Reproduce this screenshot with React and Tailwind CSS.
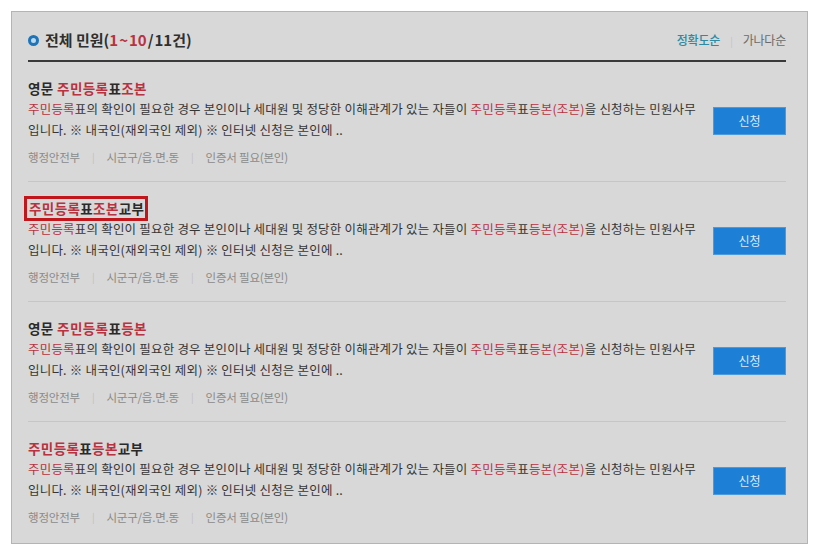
import React from "react";

const R = ({ children }) => <span className="text-[#b83240]">{children}</span>;

const items = [
  { pre: "영문 ", a: "조본", post: "", boxed: false },
  { pre: "", a: "조본", post: "교부", boxed: true },
  { pre: "영문 ", a: "등본", post: "", boxed: false },
  { pre: "", a: "등본", post: "교부", boxed: false },
];

function Title({ it }) {
  const inner = (
    <>
      {it.pre}
      <R>주민등록</R>표<R>{it.a}</R>
      {it.post}
    </>
  );
  return (
    <div className="h-[20px] leading-[20px] text-[13.5px] tracking-[0.4px] font-bold text-[#2a2a2a]">
      {it.boxed ? (
        <span className="relative inline-block pl-[1px]">
          {inner}
          <span className="absolute -left-[4px] -right-[4px] -top-[2px] -bottom-[3px] border-[3px] border-[#c2161d]" />
        </span>
      ) : (
        inner
      )}
    </div>
  );
}

function Item({ it, last }) {
  return (
    <div className={`flex pt-[16px] ${last ? "pb-[14px]" : "pb-[14px] border-b border-[#c6c6c6]"}`}>
      <div className="flex-1">
        <Title it={it} />
        <div className="text-[12.5px] leading-[21px] tracking-[0.2px] text-[#363636] whitespace-nowrap">
          <R>주민등록</R>표의 확인이 필요한 경우 본인이나 세대원 및 정당한 이해관계가 있는 자들이 <R>주민등록</R>표<R>등본(조본)</R>을 신청하는 민원사무
          <br />
          입니다. ※ 내국인(재외국인 제외) ※ 인터넷 신청은 본인에 ..
        </div>
        <div className="mt-[7px] h-[20px] leading-[20px] text-[11.5px] tracking-[-0.2px] text-[#8a8a8a] flex items-center">
          <span>행정안전부</span>
          <span className="mx-[12px] text-[#c0c0c0] text-[10px]">|</span>
          <span>시군구/읍.면.동</span>
          <span className="mx-[12px] text-[#c0c0c0] text-[10px]">|</span>
          <span>인증서 필요(본인)</span>
        </div>
      </div>
      <button className="mt-[29px] self-start w-[73px] h-[28px] bg-[#1d7fd6] border border-[#4a9ae0] text-[#dbeaf8] text-[12px] leading-none">
        신청
      </button>
    </div>
  );
}

export default function App() {
  return (
    <div
      className="w-[820px] h-[556px] bg-white pt-[11px] pl-[11px]"
      style={{ fontFamily: '"Noto Sans CJK KR", "Noto Sans", sans-serif' }}
    >
      <div className="w-[797px] h-[533px] bg-[#d8d8d8] border border-[#b4b4b4] pl-[16px] pr-[21px]">
        <div className="h-[50px] pt-[17px] flex items-start justify-between border-b-2 border-[#3a3a3a]">
          <div className="flex items-center h-[22px]">
            <span className="w-[11px] h-[11px] rounded-full border-[3px] border-[#1f74b8] bg-[#bcd9ee] mr-[6px]" />
            <span className="text-[15px] font-bold text-[#2f2f2f] leading-[22px]">
              전체 민원(<span className="text-[#b83240]">1<span className="mx-[1px]">~</span>10</span><span className="mx-[1px]">/</span>11건)
            </span>
          </div>
          <div className="flex items-center h-[22px] text-[12px] tracking-[-0.2px]">
            <span className="text-[#2d8aa3] font-medium">정확도순</span>
            <span className="mx-[10px] text-[#c4c4c4] text-[10px]">|</span>
            <span className="text-[#6a6a6a]">가나다순</span>
          </div>
        </div>
        {items.map((it, i) => (
          <Item key={i} it={it} last={i === items.length - 1} />
        ))}
      </div>
    </div>
  );
}
